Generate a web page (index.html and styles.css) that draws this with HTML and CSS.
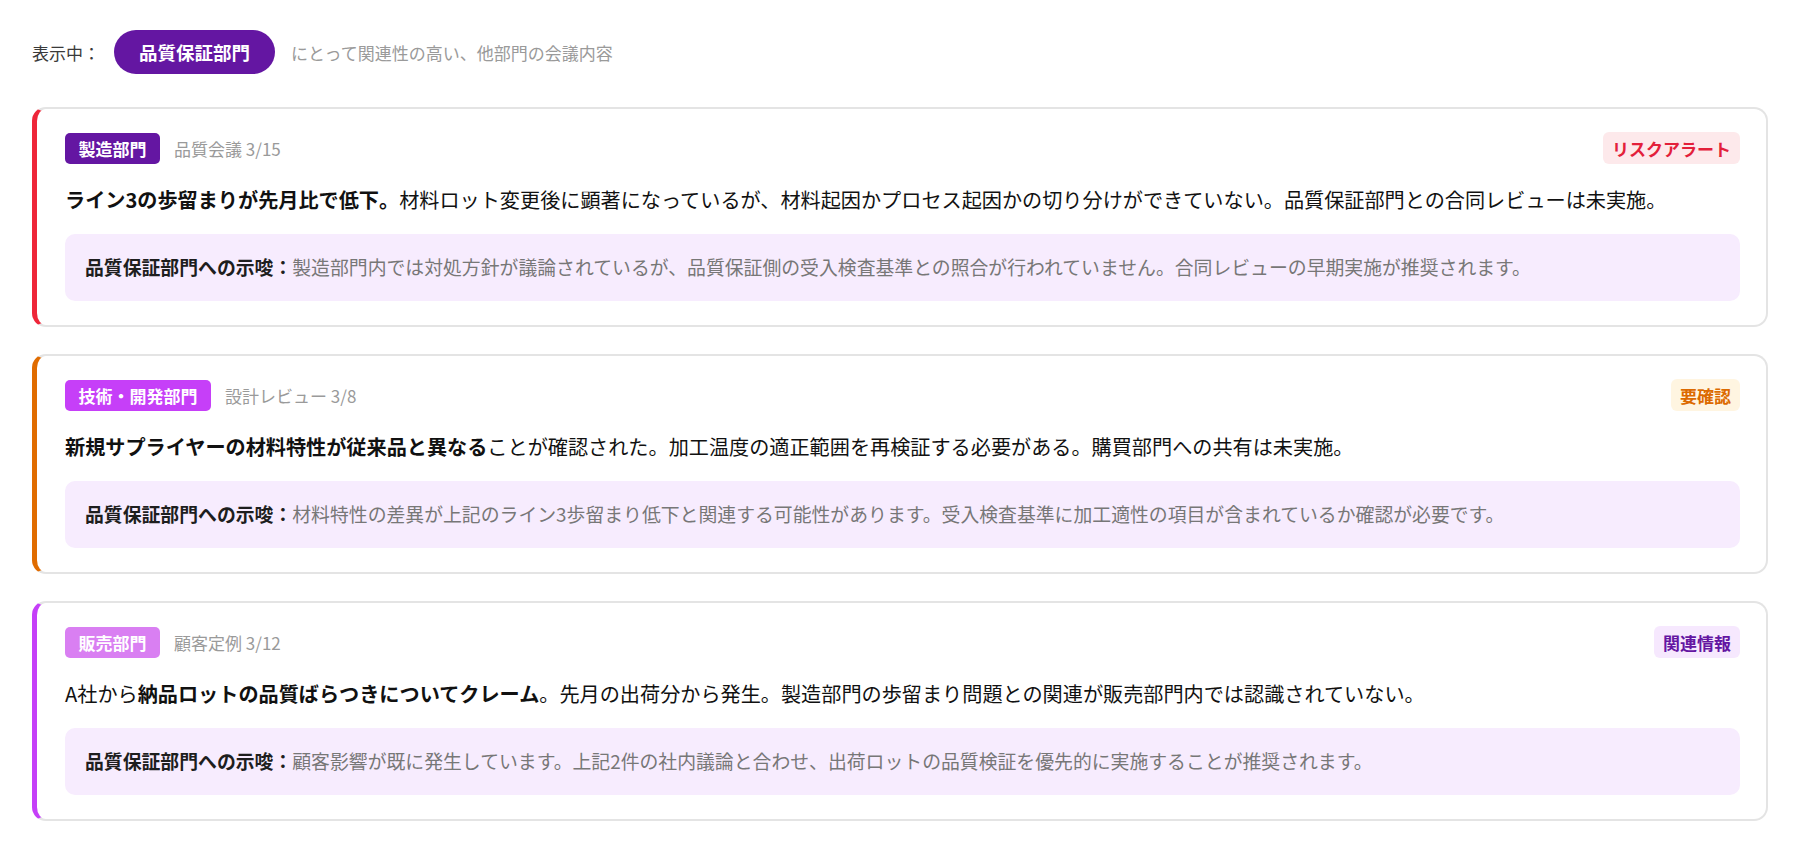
FILE: index.html
```html
<!DOCTYPE html>
<html lang="ja">
<head>
<meta charset="utf-8">
<title>関連会議内容</title>
<link rel="stylesheet" href="styles.css">
</head>
<body>
<div class="page">
  <div class="filter">
    <span class="filter-label">表示中：</span>
    <span class="filter-pill">品質保証部門</span>
    <span class="filter-desc">にとって関連性の高い、他部門の会議内容</span>
  </div>

  <div class="card card-risk">
    <div class="card-head">
      <div class="card-src">
        <span class="dept dept-mfg">製造部門</span>
        <span class="meta">品質会議 3/15</span>
      </div>
      <span class="badge badge-risk">リスクアラート</span>
    </div>
    <p class="summary"><strong>ライン3の歩留まりが先月比で低下。</strong>材料ロット変更後に顕著になっているが、材料起因かプロセス起因かの切り分けができていない。品質保証部門との合同レビューは未実施。</p>
    <div class="note"><strong>品質保証部門への示唆：</strong><span class="note-text">製造部門内では対処方針が議論されているが、品質保証側の受入検査基準との照合が行われていません。合同レビューの早期実施が推奨されます。</span></div>
  </div>

  <div class="card card-check">
    <div class="card-head">
      <div class="card-src">
        <span class="dept dept-dev">技術・開発部門</span>
        <span class="meta">設計レビュー 3/8</span>
      </div>
      <span class="badge badge-check">要確認</span>
    </div>
    <p class="summary"><strong>新規サプライヤーの材料特性が従来品と異なる</strong>ことが確認された。加工温度の適正範囲を再検証する必要がある。購買部門への共有は未実施。</p>
    <div class="note"><strong>品質保証部門への示唆：</strong><span class="note-text">材料特性の差異が上記のライン3歩留まり低下と関連する可能性があります。受入検査基準に加工適性の項目が含まれているか確認が必要です。</span></div>
  </div>

  <div class="card card-info">
    <div class="card-head">
      <div class="card-src">
        <span class="dept dept-sales">販売部門</span>
        <span class="meta">顧客定例 3/12</span>
      </div>
      <span class="badge badge-info">関連情報</span>
    </div>
    <p class="summary">A社から<strong>納品ロットの品質ばらつきについてクレーム</strong>。先月の出荷分から発生。製造部門の歩留まり問題との関連が販売部門内では認識されていない。</p>
    <div class="note"><strong>品質保証部門への示唆：</strong><span class="note-text">顧客影響が既に発生しています。上記2件の社内議論と合わせ、出荷ロットの品質検証を優先的に実施することが推奨されます。</span></div>
  </div>
</div>
</body>
</html>
```

FILE: styles.css
```css
* { box-sizing: border-box; }

html, body {
  margin: 0;
  padding: 0;
  background: #ffffff;
}

body {
  font-family: "Noto Sans CJK JP", "Noto Sans", sans-serif;
  color: #1a1a1a;
}

.page {
  padding: 30px 32px 28px;
  display: flex;
  flex-direction: column;
  gap: 27px;
}

.filter {
  display: flex;
  align-items: center;
  height: 44px;
  margin-bottom: 6px;
}

.filter-label {
  font-size: 17px;
  color: #3a3a3a;
  margin-right: 14px;
}

.filter-pill {
  display: inline-flex;
  align-items: center;
  height: 44px;
  padding: 0 25px;
  border-radius: 22px;
  background: #6416a2;
  color: #fff;
  font-size: 18.5px;
  font-weight: 700;
  margin-right: 16px;
}

.filter-desc {
  font-size: 17px;
  color: #9a9a9a;
}

.card {
  border: 2px solid #e4e4e4;
  border-left: 5px solid #e8283c;
  border-radius: 14px;
  padding: 23px 26px 24px 28px;
  background: #fff;
}

.card-risk { border-left-color: #ee2639; }
.card-check { border-left-color: #e06c00; }
.card-info { border-left-color: #c53ff8; }

.card-head {
  display: flex;
  align-items: center;
  justify-content: space-between;
  height: 32px;
}

.card-src {
  display: flex;
  align-items: center;
  gap: 14px;
}

.dept {
  display: inline-flex;
  align-items: center;
  height: 31px;
  padding: 0 13.5px;
  border-radius: 5px;
  color: #fff;
  font-size: 17px;
  font-weight: 700;
}

.dept-mfg { background: #6416a2; }
.dept-dev { background: #c63ff8; }
.dept-sales { background: #d97ff2; }

.meta {
  font-size: 17px;
  color: #9a9a9a;
}

.badge {
  display: inline-flex;
  align-items: center;
  height: 32px;
  padding: 0 9px;
  border-radius: 6px;
  font-size: 17px;
  font-weight: 700;
}

.badge-risk { background: #fde9eb; color: #e3203a; }
.badge-check { background: #fff5e1; color: #dc6a00; }
.badge-info { background: #f6e8fe; color: #6416a2; }

.summary {
  margin: 20px 0 18px;
  font-size: 20.15px;
  line-height: 32px;
  color: #111;
}

.summary strong { font-weight: 700; }

.note {
  background: #f7ecfe;
  border-radius: 10px;
  padding: 18px 20px 19px;
  font-size: 18.85px;
  line-height: 30px;
}

.note strong {
  font-weight: 700;
  color: #1e1e1e;
}

.note-text {
  color: #777;
}
```
